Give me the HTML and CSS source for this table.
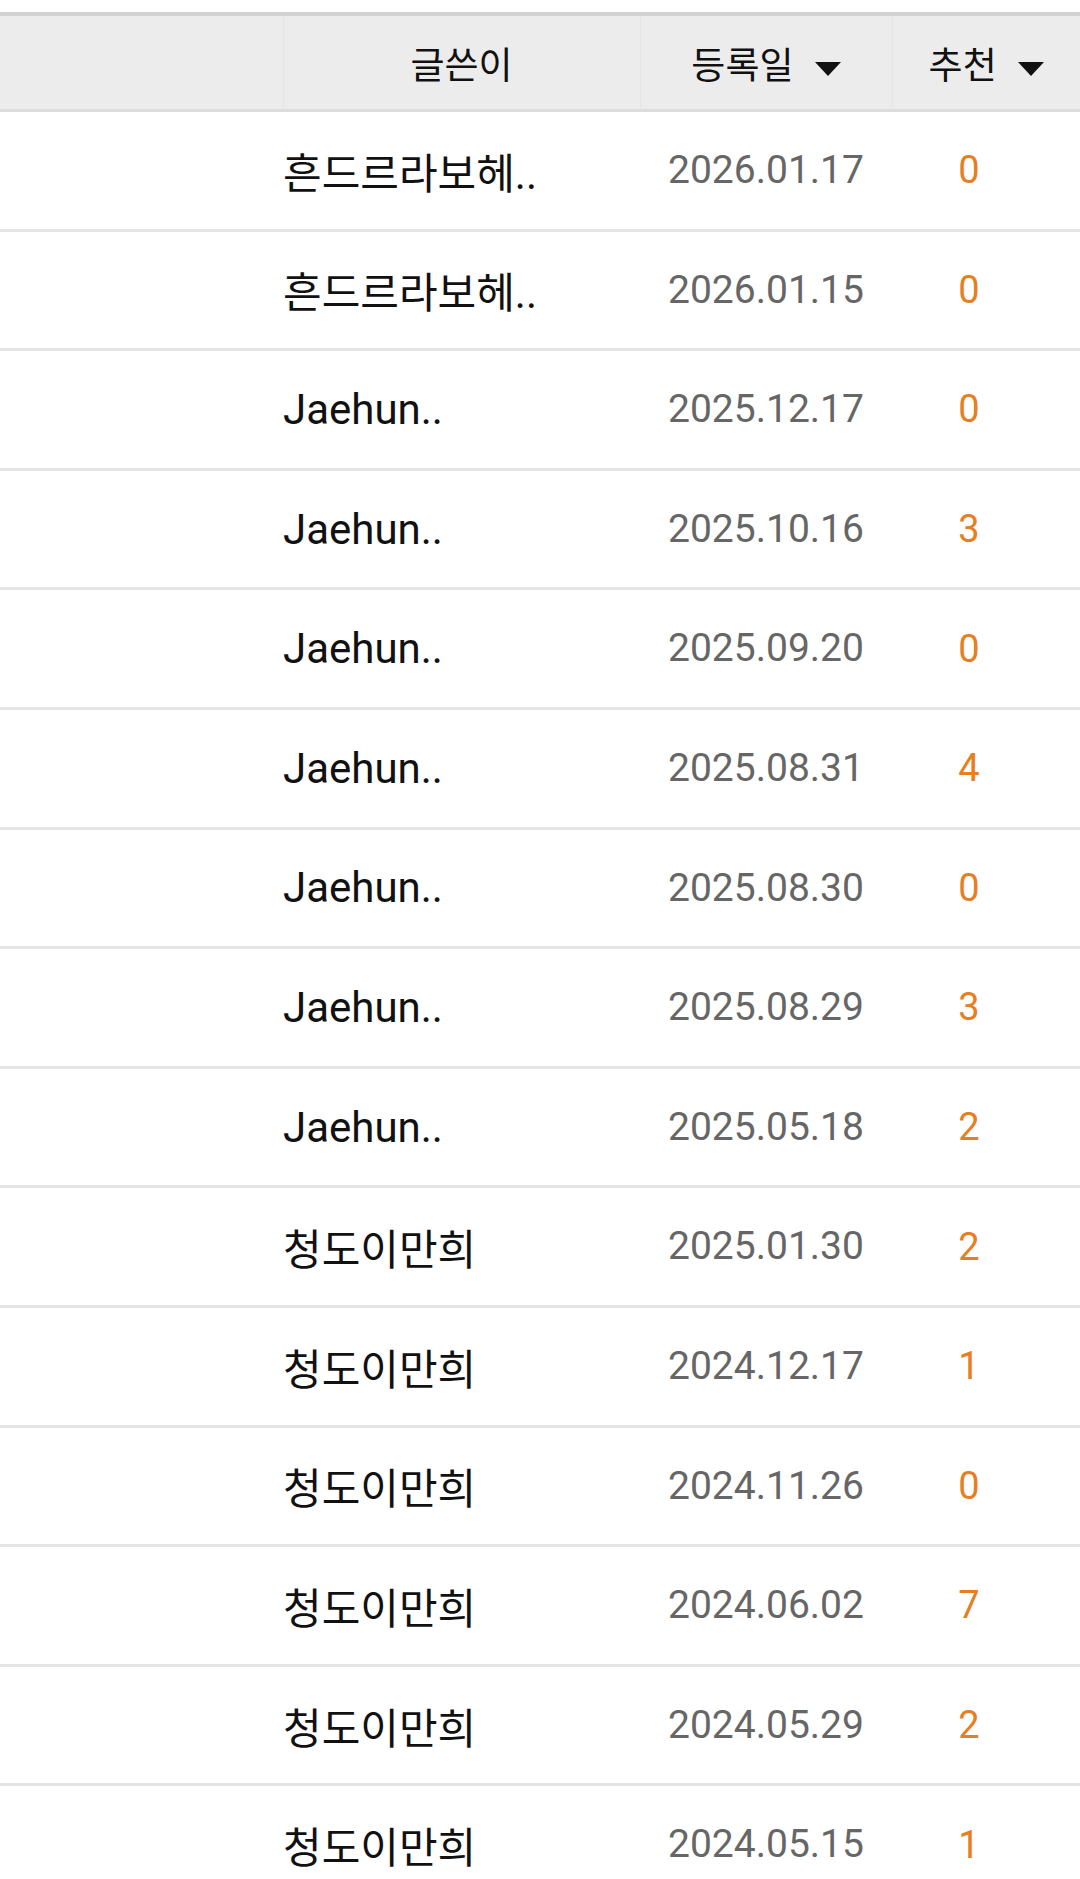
FILE: index.html
```html
<!DOCTYPE html>
<html lang="ko">
<head>
    <meta charset="UTF-8">
    <meta name="viewport" content="width=device-width, initial-scale=1.0">
    <title>게시판 목록</title>
    <link rel="stylesheet" href="styles.css">
</head>
<body>
    <table class="board">
        <colgroup>
            <col class="col-title">
            <col class="col-writer">
            <col class="col-date">
            <col class="col-rec">
        </colgroup>
        <thead>
            <tr>
                <th></th>
                <th>글쓴이</th>
                <th>등록일 <span class="sort"></span></th>
                <th>추천 <span class="sort"></span></th>
            </tr>
        </thead>
        <tbody>
            <tr><td></td><td class="writer">흔드르라보헤..</td><td class="date">2026.01.17</td><td class="rec">0</td></tr>
            <tr><td></td><td class="writer">흔드르라보헤..</td><td class="date">2026.01.15</td><td class="rec">0</td></tr>
            <tr><td></td><td class="writer">Jaehun..</td><td class="date">2025.12.17</td><td class="rec">0</td></tr>
            <tr><td></td><td class="writer">Jaehun..</td><td class="date">2025.10.16</td><td class="rec">3</td></tr>
            <tr><td></td><td class="writer">Jaehun..</td><td class="date">2025.09.20</td><td class="rec">0</td></tr>
            <tr><td></td><td class="writer">Jaehun..</td><td class="date">2025.08.31</td><td class="rec">4</td></tr>
            <tr><td></td><td class="writer">Jaehun..</td><td class="date">2025.08.30</td><td class="rec">0</td></tr>
            <tr><td></td><td class="writer">Jaehun..</td><td class="date">2025.08.29</td><td class="rec">3</td></tr>
            <tr><td></td><td class="writer">Jaehun..</td><td class="date">2025.05.18</td><td class="rec">2</td></tr>
            <tr><td></td><td class="writer">청도이만희</td><td class="date">2025.01.30</td><td class="rec">2</td></tr>
            <tr><td></td><td class="writer">청도이만희</td><td class="date">2024.12.17</td><td class="rec">1</td></tr>
            <tr><td></td><td class="writer">청도이만희</td><td class="date">2024.11.26</td><td class="rec">0</td></tr>
            <tr><td></td><td class="writer">청도이만희</td><td class="date">2024.06.02</td><td class="rec">7</td></tr>
            <tr><td></td><td class="writer">청도이만희</td><td class="date">2024.05.29</td><td class="rec">2</td></tr>
            <tr><td></td><td class="writer">청도이만희</td><td class="date">2024.05.15</td><td class="rec">1</td></tr>
        </tbody>
    </table>
</body>
</html>
```

FILE: styles.css
```css
body {
    margin: 0;
    padding-top: 12px;
    background-color: #fff;
    font-family: Roboto, "Noto Sans CJK KR", sans-serif;
    color: #111;
    overflow: hidden;
}
.board {
    width: 1080px;
    border-collapse: collapse;
    table-layout: fixed;
}
.col-title {
    width: 283px;
}
.col-writer {
    width: 357px;
}
.col-date {
    width: 252px;
}
.col-rec {
    width: 188px;
}
.board thead tr {
    background-color: #ececec;
    border-top: 4px solid #d2d2d2;
    border-bottom: 3px solid #dcdcdc;
}
.board th {
    height: 93px;
    padding: 0;
    font-size: 37px;
    font-weight: normal;
    color: #111;
    text-align: center;
    border-left: 1px solid #e5e5e5;
}
.board th:first-child {
    border-left: none;
}
.sort {
    display: inline-block;
    width: 0;
    height: 0;
    margin-left: 12px;
    vertical-align: middle;
    border-left: 13px solid transparent;
    border-right: 13px solid transparent;
    border-top: 14px solid #111;
}
.board tbody tr {
    height: 119.6px;
}
.board td {
    padding: 0;
    border-bottom: 3px solid #e4e4e4;
}
.writer {
    font-size: 42px;
    color: #111;
    white-space: nowrap;
}
.date {
    font-size: 39px;
    color: #666;
    text-align: center;
    vertical-align: top;
    padding-top: 35px !important;
}
.rec {
    font-size: 38px;
    color: #e67e22;
    text-align: center;
    padding-right: 34px !important;
}
```
